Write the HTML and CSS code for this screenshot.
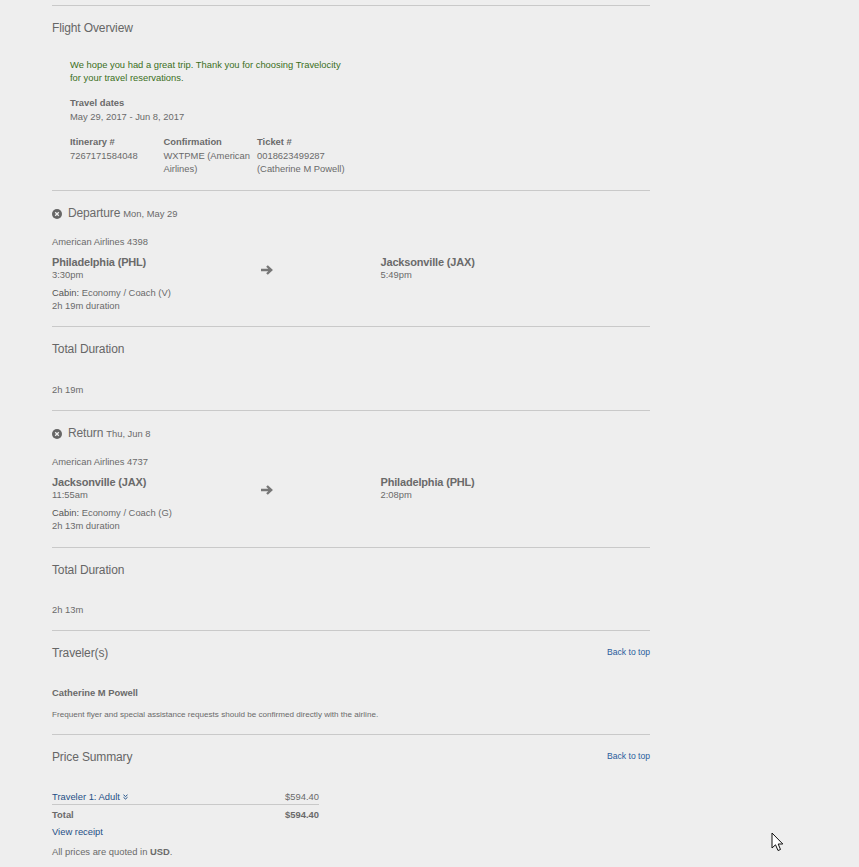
FILE: index.html
```html
<!DOCTYPE html>
<html lang="en">
<head>
<meta charset="utf-8">
<title>Flight Overview</title>
<link rel="stylesheet" href="styles.css">
</head>
<body>
<main class="page">
  <section class="section overview">
    <h2 class="title">Flight Overview</h2>
    <div class="overview-body">
      <p class="thanks">We hope you had a great trip. Thank you for choosing Travelocity<br>for your travel reservations.</p>
      <div class="dates"><div class="label stacked">Travel dates</div><div>May 29, 2017 - Jun 8, 2017</div></div>
      <div class="refs">
        <div class="ref"><div class="label stacked">Itinerary #</div><div>7267171584048</div></div>
        <div class="ref"><div class="label stacked">Confirmation</div><div>WXTPME (American Airlines)</div></div>
        <div class="ref ref-wide"><div class="label stacked">Ticket #</div><div>0018623499287<br>(Catherine M Powell)</div></div>
      </div>
    </div>
  </section>

  <section class="section leg">
    <h2 class="leg-title">
      <svg class="x-icon" viewBox="0 0 10 10"><circle cx="5" cy="5" r="5" fill="#666"/><path d="M3.2 3.200l3.600 3.600M6.800 3.200l-3.600 3.600" stroke="#eee" stroke-width="1.300"/></svg>
      <span class="leg-name">Departure</span> <span class="leg-date">Mon, May 29</span>
    </h2>
    <div class="carrier">American Airlines 4398</div>
    <div class="route">
      <div class="stop">
        <div class="city">Philadelphia (PHL)</div>
        <div>3:30pm</div>
        <div class="cabin"><span class="cabin-label">Cabin:</span> Economy / Coach (V)</div>
        <div>2h 19m duration</div>
      </div>
      <svg class="arrow" viewBox="0 0 12 10"><path d="M0 5H10M6 1L10.200 5L6 9" fill="none" stroke="#777" stroke-width="2.400"/></svg>
      <div class="stop">
        <div class="city">Jacksonville (JAX)</div>
        <div>5:49pm</div>
      </div>
    </div>
  </section>

  <section class="section total">
    <h2 class="title">Total Duration</h2>
    <div class="total-value">2h 19m</div>
  </section>

  <section class="section leg leg-return">
    <h2 class="leg-title">
      <svg class="x-icon" viewBox="0 0 10 10"><circle cx="5" cy="5" r="5" fill="#666"/><path d="M3.2 3.200l3.600 3.600M6.800 3.200l-3.600 3.600" stroke="#eee" stroke-width="1.300"/></svg>
      <span class="leg-name">Return</span> <span class="leg-date">Thu, Jun 8</span>
    </h2>
    <div class="carrier">American Airlines 4737</div>
    <div class="route">
      <div class="stop">
        <div class="city">Jacksonville (JAX)</div>
        <div>11:55am</div>
        <div class="cabin"><span class="cabin-label">Cabin:</span> Economy / Coach (G)</div>
        <div>2h 13m duration</div>
      </div>
      <svg class="arrow" viewBox="0 0 12 10"><path d="M0 5H10M6 1L10.200 5L6 9" fill="none" stroke="#777" stroke-width="2.400"/></svg>
      <div class="stop">
        <div class="city">Philadelphia (PHL)</div>
        <div>2:08pm</div>
      </div>
    </div>
  </section>

  <section class="section total total-return">
    <h2 class="title">Total Duration</h2>
    <div class="total-value">2h 13m</div>
  </section>

  <section class="section travelers">
    <div class="head-row"><h2 class="title">Traveler(s)</h2><a class="link" href="#">Back to top</a></div>
    <div class="label traveler-name">Catherine M Powell</div>
    <div class="note">Frequent flyer and special assistance requests should be confirmed directly with the airline.</div>
  </section>

  <section class="section prices">
    <div class="head-row"><h2 class="title">Price Summary</h2><a class="link" href="#">Back to top</a></div>
    <div class="price-table">
      <div class="price-row price-traveler"><a class="link-text" href="#">Traveler 1: Adult <svg class="chev" viewBox="0 0 5 6"><path d="M0.500 0.800L2.500 2.500L4.500 0.800M0.500 3.300L2.500 5L4.500 3.300" fill="none" stroke="#1f4f86" stroke-width="1"/></svg></a><span>$594.40</span></div>
      <div class="price-row label"><span>Total</span><span>$594.40</span></div>
    </div>
    <a class="link-text receipt" href="#">View receipt</a>
    <div class="quoted">All prices are quoted in <span class="label">USD</span>.</div>
  </section>
</main>
<svg class="cursor" viewBox="0 0 13 20"><path d="M1 1V16L4.500 12.800L7 18.500L9.500 17.500L7.200 12H11.800Z" fill="#fff" stroke="#111" stroke-width="1"/></svg>
</body>
</html>
```

FILE: styles.css
```css
* { box-sizing: border-box; }
html, body { margin: 0; height: 867px; overflow: hidden; }
body {
  background: #eeeeee;
  color: #6a6a6a;
  font-family: "Liberation Sans", Arial, sans-serif;
  font-size: 9.400px;
  line-height: 13px;
}
.page { width: 598px; margin-left: 52px; padding-top: 5px; }
.section { border-top: 1px solid #c9c9c9; }
h2 { margin: 0; font-weight: normal; }
.title { font-size: 12px; letter-spacing: -0.130px; line-height: 16px; color: #666; }
.label { font-weight: bold; }
.stacked { margin-bottom: 1px; }
.cabin-label { color: #555; }
.overview { height: 185px; padding-top: 14px; }
.overview-body { padding: 22px 0 0 18px; }
.thanks { margin: 0 0 12px; color: #3b6e1c; }
.dates { margin-bottom: 12px; }
.refs { display: flex; }
.ref { width: 93.500px; padding-right: 6px; }
.ref-wide { width: 110px; padding-right: 0; }
.leg { height: 136px; padding-top: 15px; }
.leg-return { height: 137px; }
.leg-title { display: flex; align-items: baseline; font-size: 9.400px; line-height: 14px; }
.x-icon { width: 10px; height: 10px; margin-right: 6px; align-self: center; }
.leg-name { font-size: 12px; letter-spacing: -0.130px; margin-right: 3px; }
.carrier { margin-top: 14px; }
.route { display: flex; margin-top: 8px; }
.stop { width: 190px; }
.stop:last-child { margin-left: 107.500px; }
.city { font-size: 11px; letter-spacing: -0.170px; font-weight: bold; line-height: 12px; }
.cabin { margin-top: 5px; }
.arrow { width: 12px; height: 10px; margin: 9px 0 0 19px; }
.total { height: 84px; padding-top: 14px; }
.total-return { height: 83px; }
.total-value { margin-top: 26px; }
.total-return .total-value { margin-top: 25px; }
.head-row { display: flex; justify-content: space-between; align-items: flex-start; }
.link { color: #2a5d9c; font-size: 8.600px; line-height: 13px; text-decoration: none; margin-top: 1px; }
.link-text { color: #1f4f86; text-decoration: none; }
.travelers { height: 104px; padding-top: 14px; }
.traveler-name { margin-top: 25px; }
.note { margin-top: 9px; font-size: 8.100px; line-height: 13px; }
.prices { padding-top: 14px; }
.price-table { width: 267px; margin-top: 25px; }
.price-row { display: flex; justify-content: space-between; height: 18px; padding-top: 3px; }
.price-traveler { height: 15px; border-bottom: 1px solid #c9c9c9; padding-top: 0; line-height: 13px; }
.chev { width: 5px; height: 6px; }
.receipt { display: block; margin-top: 2px; }
.quoted { margin-top: 7px; }
.cursor { position: absolute; left: 771px; top: 832px; width: 13px; height: 20px; }
```
